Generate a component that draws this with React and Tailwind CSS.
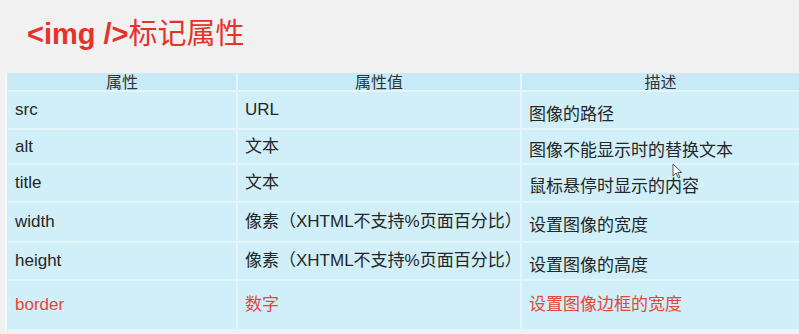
import React from "react";

const rows = [
  { name: "src", value: "URL", desc: "图像的路径", h: "h-[38px]", dpad: "pt-[9px]" },
  { name: "alt", value: "文本", desc: "图像不能显示时的替换文本", h: "h-[35px]", dpad: "pt-[8px]" },
  { name: "title", value: "文本", desc: "鼠标悬停时显示的内容", h: "h-[38px]", dpad: "pt-[8px]" },
  { name: "width", value: "像素（XHTML不支持%页面百分比）", desc: "设置图像的宽度", h: "h-[40px]", dpad: "pt-[8px]" },
  { name: "height", value: "像素（XHTML不支持%页面百分比）", desc: "设置图像的高度", h: "h-[38px]", dpad: "pt-[10px]" },
  { name: "border", value: "数字", desc: "设置图像边框的宽度", h: "h-[50px]", dpad: "pt-0", red: true },
];

const font = "font-['Liberation_Sans','Noto_Sans_CJK_SC',sans-serif]";

export default function App() {
  return (
    <div className={`relative w-[799px] h-[334px] overflow-hidden bg-[#f1f1f1] ${font}`}>
      {/* Title */}
      <div className="h-[73px] pl-[27px] pt-[16px]">
        <h1 className="text-[29px] leading-[36px] text-[#e5332a]">
          <span className="font-bold">&lt;img /&gt;</span>
          <span>标记属性</span>
        </h1>
      </div>

      {/* Table */}
      <div className="flex">
        <div className="w-[8px] border-r border-[#e2e2e2] border-l-[5px] border-l-[#f1f1f1] bg-[#fafafa]" />
        <div className="flex-1 bg-[#d0eff9]">
          <div className="grid grid-cols-[230px_284px_1fr] h-[19px] bg-[#c8eaf6] border-b-2 border-[#e2f6fc] text-[16px] leading-[19px] text-[#333]">
            <div className="text-center border-r-2 border-[#e2f6fc]">属性</div>
            <div className="text-center border-r-2 border-[#e2f6fc]">属性值</div>
            <div className="text-center">描述</div>
          </div>
          {rows.map((r) => (
            <div
              key={r.name}
              className={`grid grid-cols-[230px_284px_1fr] ${r.h} border-b-2 border-[#e2f6fc] text-[17px] ${
                r.red ? "text-[#e4463d]" : "text-[#262626]"
              }`}
            >
              <div className="flex items-center pl-[7px] border-r-2 border-[#e2f6fc]">{r.name}</div>
              <div className="flex items-center pl-[7px] border-r-2 border-[#e2f6fc]">{r.value}</div>
              <div className={`flex items-center pl-[7px] ${r.dpad}`}>{r.desc}</div>
            </div>
          ))}
        </div>
      </div>

      {/* Mouse cursor */}
      <svg className="absolute left-[672px] top-[163px]" width="11" height="16" viewBox="0 0 11 16">
        <path d="M1 1 L1 13 L4 10 L6.5 15 L8 14.3 L5.7 9.5 L9.8 9.5 Z" fill="#fff" stroke="#555" strokeWidth="1" strokeLinejoin="round" />
      </svg>
    </div>
  );
}
